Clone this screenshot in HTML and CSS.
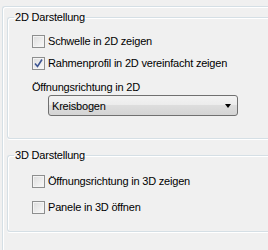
FILE: index.html
```html
<!DOCTYPE html>
<html lang="de">
<head>
    <meta charset="UTF-8">
    <title>Darstellung</title>
    <link rel="stylesheet" href="styles.css">
</head>
<body>
    <div class="frame">
        <!-- 2D -->
        <fieldset class="group group-2d">
            <legend>2D Darstellung</legend>
            <div class="group-body">
                <label class="check">
                    <span class="box"></span>
                    Schwelle in 2D zeigen
                </label>
                <label class="check">
                    <span class="box">
                        <svg width="11" height="11" viewBox="0 0 11 11"><path d="M2 5.5 L4.5 8.5 L9 1.5" fill="none" stroke="#3d5593" stroke-width="1.6"/></svg>
                    </span>
                    Rahmenprofil in 2D vereinfacht zeigen
                </label>
                <div class="field-label">Öffnungsrichtung in 2D</div>
                <div class="combo">
                    <span>Kreisbogen</span>
                    <span class="arrow"></span>
                </div>
            </div>
        </fieldset>

        <!-- 3D -->
        <fieldset class="group group-3d">
            <legend>3D Darstellung</legend>
            <div class="group-body">
                <label class="check">
                    <span class="box"></span>
                    Öffnungsrichtung in 3D zeigen
                </label>
                <label class="check">
                    <span class="box"></span>
                    Panele in 3D öffnen
                </label>
            </div>
        </fieldset>
    </div>
</body>
</html>
```

FILE: styles.css
```css
html, body {
    overflow: hidden;
}

body {
    margin: 0;
    background: #f0f0f0;
    font-family: "Liberation Sans", Arial, sans-serif;
    font-size: 11px;
    letter-spacing: -0.2px;
    color: #000;
}

/* outer etched frame, cut off at the right and bottom */
.frame {
    margin: 6px 0 0 2px;
    height: calc(100vh - 6px);
    border: 1px solid #d5dfe5;
    border-right: none;
    border-bottom: none;
    border-top-left-radius: 3px;
    box-shadow: inset 1px 1px 0 #fff;
    box-sizing: border-box;
    padding-top: 4px;
}

.group {
    margin: 0 0 0 4px;
    padding: 0;
    border: 1px solid #d5dfe5;
    border-right: none;
    border-radius: 3px 0 0 3px;
    box-shadow: inset 1px 1px 0 #fff, 0 1px 0 #fff;
    min-width: 0;
}

.group legend {
    margin-left: 6px;
    padding: 0 1px;
    line-height: 13px;
}

.group-body {
    padding: 6px 0 22px 24px;
}

.group-3d {
    margin-top: 10px;
}

.group-3d .group-body {
    padding-top: 8px;
    padding-bottom: 13px;
}

.group-3d .check + .check {
    margin-top: 4px;
}

.check {
    display: flex;
    align-items: center;
    gap: 3px;
    height: 22px;
}

.box {
    width: 13px;
    height: 13px;
    box-sizing: border-box;
    border: 1px solid #8e8f8f;
    background: linear-gradient(135deg, #dcdcdc, #fafafa);
    box-shadow: inset 0 0 0 1px #f4f4f4;
    display: flex;
    align-items: center;
    justify-content: center;
}

.field-label {
    margin-top: 6px;
    line-height: 14px;
}

.combo {
    margin: 1px 0 0 16px;
    width: 190px;
    height: 21px;
    box-sizing: border-box;
    border: 1px solid #707070;
    border-radius: 3px;
    background: linear-gradient(#f3f3f3, #ebebeb 50%, #dddddd 50%, #d4d4d4);
    display: flex;
    align-items: center;
    justify-content: space-between;
    padding: 0 3px 0 3px;
}

.arrow {
    width: 0;
    height: 0;
    border-left: 3.5px solid transparent;
    border-right: 3.5px solid transparent;
    border-top: 4px solid #000;
    margin-right: 3px;
}
```
